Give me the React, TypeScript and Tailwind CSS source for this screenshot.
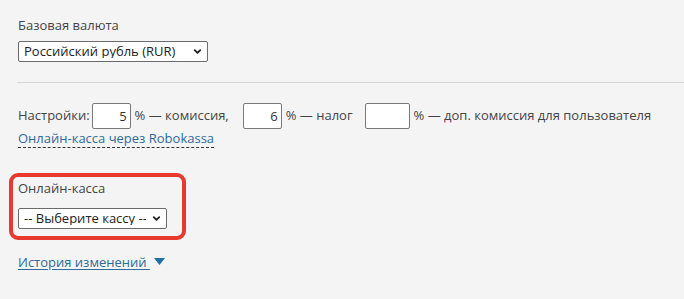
import { ChevronDown } from "lucide-react";

function Select({ label, width }: { label: string; width: string }) {
  return (
    <div className={`relative ${width}`}>
      <select className="w-full h-[21px] appearance-none bg-white border border-[#6b6b6b] rounded-[2px] pl-[5px] pr-5 text-[13px] leading-none text-[#222] outline-none">
        <option>{label}</option>
      </select>
      <ChevronDown className="absolute right-[5px] top-[5px] w-[11px] h-[11px] text-[#222] pointer-events-none" strokeWidth={4} />
    </div>
  );
}

function NumInput({ value, width }: { value: string; width: string }) {
  return (
    <input
      readOnly
      value={value}
      className={`${width} h-[26px] bg-white border border-[#7a7a7a] rounded-[2px] text-right pr-[3px] text-[13px] text-[#333] outline-none`}
    />
  );
}

export default function App() {
  return (
    <div
      className="w-[684px] h-[299px] bg-[#f4f4f4] text-[13px] text-[#444] overflow-hidden"
      style={{ fontFamily: '"Open Sans", "Noto Sans", sans-serif' }}
    >
      <div className="pl-[18px] pt-[16px]">
        <div className="leading-[18px]">Базовая валюта</div>
        <div className="mt-[7px]">
          <Select label="Российский рубль (RUR)" width="w-[190px]" />
        </div>
      </div>

      <div className="ml-[17px] mt-[20px] border-t border-[#d6d6d6]" />

      <div className="pl-[18px] pt-[20px]">
        <div className="flex items-center">
          <span>Настройки:</span>
          <span className="ml-[2px]">
            <NumInput value="5" width="w-[39px]" />
          </span>
          <span className="ml-[4px]">% — комиссия,</span>
          <span className="ml-[14px]">
            <NumInput value="6" width="w-[39px]" />
          </span>
          <span className="ml-[4px]">% — налог</span>
          <span className="ml-[12px]">
            <NumInput value="" width="w-[45px]" />
          </span>
          <span className="ml-[4px]">% — доп. комиссия для пользователя</span>
        </div>
        <a className="inline-block -mt-[2px] leading-[18px] text-[#2f6a9a] border-b border-dashed border-[#333]">
          Онлайн-касса через Robokassa
        </a>
      </div>

      <div className="ml-[9px] mt-[24px] w-[177px] border-4 border-[#e8392f] rounded-[9px] pl-[5px] pt-[2px] pb-[7px]">
        <div className="leading-[18px]">Онлайн-касса</div>
        <div className="mt-[11px]">
          <Select label="-- Выберите кассу --" width="w-[149px]" />
        </div>
      </div>

      <div className="pl-[18px] mt-[13px] flex items-center">
        <a className="leading-[18px] text-[#2f6a9a] underline underline-offset-2">История изменений&nbsp;</a>
        <svg width="11" height="7" viewBox="0 0 11 7" className="ml-[4px]">
          <path d="M0 0 H11 L5.5 7 Z" fill="#1f6fa8" />
        </svg>
      </div>
    </div>
  );
}
